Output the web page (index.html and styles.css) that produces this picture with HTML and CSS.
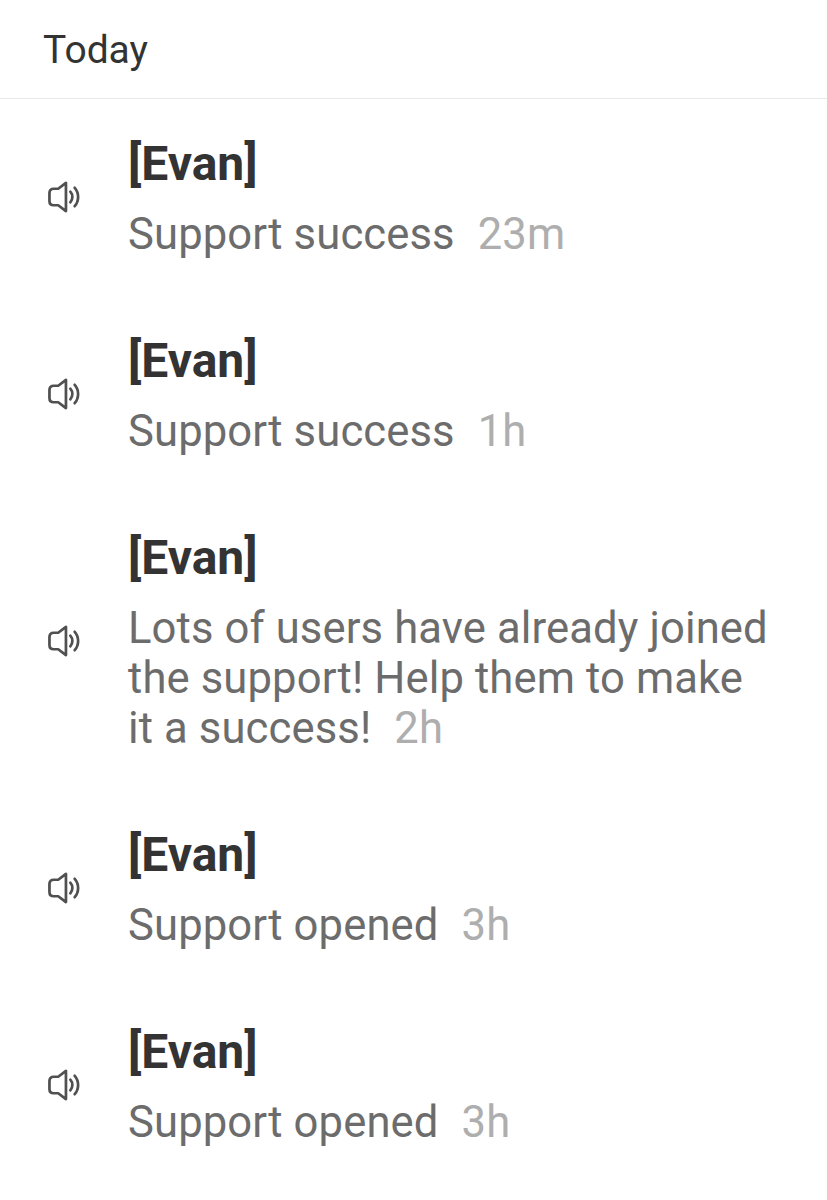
FILE: index.html
```html
<!DOCTYPE html>
<html lang="en">
<head>
<meta charset="utf-8">
<title>Today</title>
<link rel="stylesheet" href="styles.css">
</head>
<body>
<svg class="defs" width="0" height="0" aria-hidden="true">
  <symbol id="speaker" viewBox="0 0 34 32">
    <path d="M18.5 1.5V30.5L10.5 24.5H6C3.3 24.5 1.5 22.7 1.5 20V12C1.5 9.3 3.3 7.5 6 7.5H10.5Z" fill="none" stroke="currentColor" stroke-width="2.8" stroke-linejoin="round"/>
    <path d="M23 10.5C25.8 13.6 25.8 18.4 23 21.5" fill="none" stroke="currentColor" stroke-width="2.8" stroke-linecap="round"/>
    <path d="M27.5 6.5C32.2 11.8 32.2 20.2 27.5 25.5" fill="none" stroke="currentColor" stroke-width="2.8" stroke-linecap="round"/>
  </symbol>
</svg>
<header class="head">Today</header>
<main class="list">
  <article class="row">
    <svg class="icon"><use href="#speaker"/></svg>
    <div class="body">
      <h2 class="title">[Evan]</h2>
      <p class="text">Support success<span class="time">23m</span></p>
    </div>
  </article>
  <article class="row">
    <svg class="icon"><use href="#speaker"/></svg>
    <div class="body">
      <h2 class="title">[Evan]</h2>
      <p class="text">Support success<span class="time">1h</span></p>
    </div>
  </article>
  <article class="row">
    <svg class="icon"><use href="#speaker"/></svg>
    <div class="body">
      <h2 class="title">[Evan]</h2>
      <p class="text">Lots of users have already joined the support! Help them to make it a success!<span class="time">2h</span></p>
    </div>
  </article>
  <article class="row">
    <svg class="icon"><use href="#speaker"/></svg>
    <div class="body">
      <h2 class="title">[Evan]</h2>
      <p class="text">Support opened<span class="time">3h</span></p>
    </div>
  </article>
  <article class="row">
    <svg class="icon"><use href="#speaker"/></svg>
    <div class="body">
      <h2 class="title">[Evan]</h2>
      <p class="text">Support opened<span class="time">3h</span></p>
    </div>
  </article>
</main>
</body>
</html>
```
FILE: styles.css
```css
* { box-sizing: border-box; }
html, body { margin: 0; padding: 0; background: #fff; }
body { width: 827px; height: 1200px; overflow: hidden; font-family: Roboto, "Liberation Sans", sans-serif; }
.defs { position: absolute; }
.head {
  height: 99px;
  padding: 28px 43px 0;
  font-size: 39px;
  line-height: 44px;
  color: #333;
  border-bottom: 1px solid #e8e8e8;
}
.list { display: flex; flex-direction: column; }
.row {
  display: flex;
  align-items: center;
  padding: 38px 56px 36px 48px;
}
.icon { width: 33px; height: 32px; flex: none; margin: 0 47px 3px 0; color: #505050; }
.body { flex: 1; min-width: 0; }
.title {
  margin: 0 0 19px;
  font-size: 48px;
  line-height: 54px;
  font-weight: 700;
  color: #333;
}
.text {
  margin: 0;
  font-size: 43.6px;
  line-height: 50px;
  letter-spacing: 0.12px;
  color: #6c6c6c;
}
.time { margin-left: 23px; color: #aeaeae; }
```
